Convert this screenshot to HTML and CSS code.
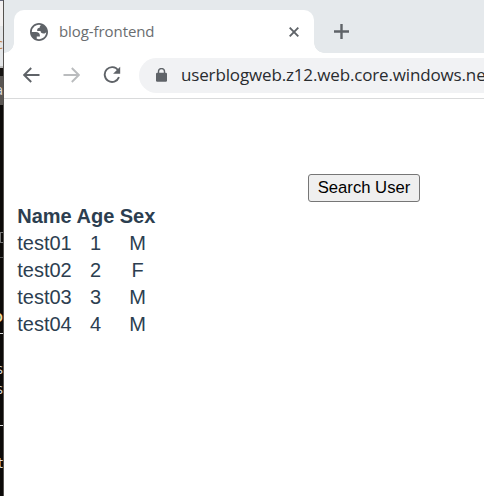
FILE: index.html
```html
<!DOCTYPE html>
<html lang="en">
<head>
<meta charset="utf-8">
<title>blog-frontend</title>
<link rel="stylesheet" href="styles.css">
</head>
<body>
<aside class="backdrop">
  <div class="piece piece-top"></div>
  <div class="piece piece-tab"><span class="sliver orange">c</span></div>
  <div class="piece piece-line"></div>
  <div class="piece piece-dark"></div>
  <div class="piece piece-menu"><span class="sliver">a</span></div>
  <div class="piece piece-editor">
    <i class="box"></i><i class="rule dim"></i>
    <span class="sliver cream">o</span><i class="rule"></i>
    <span class="sliver first">s</span><span class="sliver">s</span>
    <i class="rule second"></i><span class="sliver last">t</span>
  </div>
</aside>
<div class="window">
  <header class="tabstrip">
    <div class="corner corner-left"></div>
    <div class="tab">
      <svg class="globe" viewBox="2 2 20 20" width="18" height="18">
        <path fill-rule="evenodd" d="M12 2C6.480 2 2 6.480 2 12s4.480 10 10 10 10-4.480 10-10S17.520 2 12 2ZM4 12h4.400c3.407.022 4.922 1.730 4.543 5.127H9.488v2.470A8.004 8.004 0 0 0 20 12c-.667 1.151-1.667 1.727-3 1.727-2.182 0-3.270-.910-3.270-2.727h-3.730c-.270-2.450.540-3.670 2.730-3.670 0-1.020.270-1.740.820-2.150l.370-.980A8 8 0 0 0 4 12Z" fill="#5f6368"/>
      </svg>
      <span class="tab-title">blog-frontend</span>
      <svg class="close" viewBox="0 0 10 10" width="10" height="10"><path d="M.7.7l8.6 8.6M9.3.7.7 9.3" stroke="#5f6368" stroke-width="1.9"/></svg>
    </div>
    <div class="corner corner-right"></div>
    <svg class="plus" viewBox="0 0 15 15" width="15" height="15"><path d="M7.5 0v15M0 7.5h15" stroke="#5f6368" stroke-width="2.4"/></svg>
  </header>
  <nav class="toolbar">
    <svg class="back" viewBox="0 0 17 16" width="17" height="16"><path d="M16.5 8H1.7M8.2 1 1.2 8l7 7" fill="none" stroke="#5f6368" stroke-width="1.9"/></svg>
    <svg class="forward" viewBox="0 0 17 16" width="17" height="16"><path d="M.5 8h14.8M8.8 1l7 7-7 7" fill="none" stroke="#babcbe" stroke-width="1.9"/></svg>
    <svg class="reload" viewBox="0 0 18 18" width="18" height="18"><path d="M15.2 4.3A7.4 7.4 0 1 0 16 11.2" fill="none" stroke="#5f6368" stroke-width="1.9"/><path d="M17.2.7v7.1h-7.1Z" fill="#5f6368"/></svg>
    <div class="address">
      <svg class="lock" viewBox="0 0 11 14" width="11" height="14"><path d="M2.5 6V3.6a3 3 0 0 1 6 0V6" fill="none" stroke="#5f6368" stroke-width="1.4"/><rect y="4.8" width="11" height="9" rx="1.2" fill="#5f6368"/></svg>
      <span class="url">userblogweb.z12.web.core.windows.net</span>
    </div>
  </nav>
  <main class="page">
    <button class="search">Search User</button>
    <table class="users">
      <thead><tr><th>Name</th><th>Age</th><th>Sex</th></tr></thead>
      <tbody>
        <tr><td>test01</td><td>1</td><td>M</td></tr>
        <tr><td>test02</td><td>2</td><td>F</td></tr>
        <tr><td>test03</td><td>3</td><td>M</td></tr>
        <tr><td>test04</td><td>4</td><td>M</td></tr>
      </tbody>
    </table>
  </main>
</div>
</body>
</html>
```
FILE: styles.css
```css
* { box-sizing: border-box; }
body {
  margin: 0;
  width: 484px;
  height: 496px;
  display: flex;
  overflow: hidden;
  background: #fff;
}
svg { display: block; flex: none; }

/* Sliver of the windows behind the browser */
.backdrop {
  flex: none;
  width: 4px;
  height: 496px;
  overflow: hidden;
  border-right: 1px solid #55524f;
  font: 14px/18px "Open Sans", sans-serif;
  color: #ddd;
}
.piece { overflow: hidden; }
.piece-top { height: 26px; background: #f3f1f1; border-top: 1px solid #66697c; }
.piece-tab { height: 40px; background: #e4e6e8; padding-top: 9px; }
.piece-line { height: 2px; background: #bbb; }
.piece-dark { height: 8px; background: #171412; }
.piece-menu { height: 29px; background: #5a5653; padding-top: 5px; }
.piece-editor { height: 391px; background: #0c0a09; }
.sliver { display: block; width: 3px; height: 18px; direction: rtl; overflow: hidden; }
.orange { color: #c58548; }
.cream { margin-top: 49px; color: #f0d9a0; font-size: 16px; font-weight: 600; }
.first { margin-top: 26px; height: 20px; }
.last { margin-top: 28px; }
.box { display: block; width: 4px; height: 11px; margin-top: 127px; border: 1px solid #777; border-right: 0; }
.rule { display: block; height: 1px; margin-top: 8px; background: #ddd; }
.rule.dim { margin-top: 14px; background: #555; }
.rule.second { margin-top: 27px; }

.window { flex: none; width: 480px; height: 496px; overflow: hidden; }
.tabstrip {
  height: 53px;
  padding-top: 10px;
  display: flex;
  background: #e5e9ec;
}
.corner { flex: none; width: 10px; height: 43px; }
.corner-left { background: radial-gradient(circle at 0 0, transparent 9.5px, #fff 10px) 0 33px / 10px 10px no-repeat; }
.corner-right { background: radial-gradient(circle at 100% 0, transparent 9.5px, #fff 10px) 0 33px / 10px 10px no-repeat; }
.tab {
  flex: none;
  width: 300px;
  height: 43px;
  padding: 0 15px 0 16px;
  display: flex;
  align-items: center;
  border-radius: 10px 10px 0 0;
  background: #fff;
}
.globe { margin-top: 1px; }
.tab-title {
  margin: -2px 0 0 11px;
  font: 15px/20px "Open Sans", sans-serif;
  letter-spacing: -.08px;
  color: #6a6d70;
}
.close { margin-left: auto; }
.plus { margin: 14px 0 0 10px; }

.toolbar {
  height: 46px;
  padding: 5px 0 6px 19px;
  display: flex;
  align-items: center;
  border-bottom: 1px solid #d9dadb;
  background: #fff;
}
.forward { margin-left: 23px; }
.reload { margin-left: 23px; }
.address {
  flex: none;
  width: 380px;
  height: 35px;
  margin-left: 18px;
  padding-left: 17px;
  display: flex;
  align-items: center;
  border-radius: 18px 0 0 18px;
  background: #f1f2f4;
}
.url {
  margin-left: 14px;
  font: 17px/24px "Open Sans", sans-serif;
  letter-spacing: -.15px;
  white-space: nowrap;
  color: #292c2f;
}

.page {
  height: 397px;
  padding: 75px 0 0 10px;
  font: 20px/22px "Liberation Sans", Arial, sans-serif;
  color: #2c3e50;
}
.search {
  display: block;
  width: 112px;
  height: 28px;
  margin-left: 294px;
  padding: 0;
  border: 1px solid #767676;
  border-radius: 3px;
  background: #efefef;
  font: 16.67px/20px "Liberation Sans", Arial, sans-serif;
  color: #000;
}
.users { table-layout: fixed; width: 145px; border-spacing: 3px 2px; text-align: center; }
.users th, .users td { height: 25px; padding: 0 0 2px; white-space: nowrap; }
.users th:nth-child(1) { width: 55px; }
.users th:nth-child(2) { width: 41px; }
.users th:nth-child(3) { width: 37px; }
```
